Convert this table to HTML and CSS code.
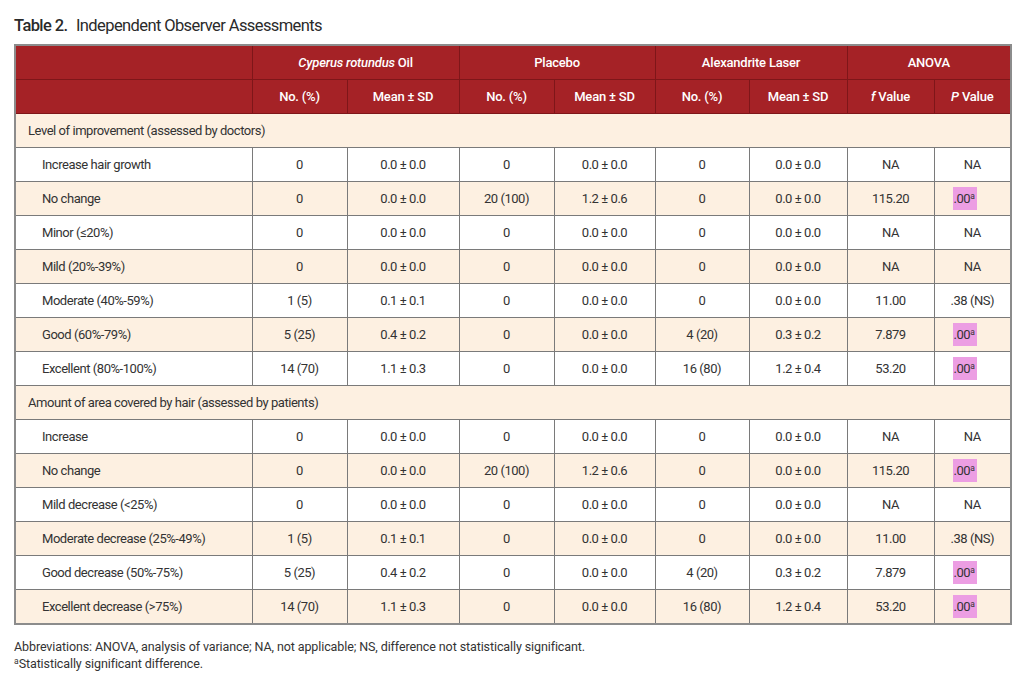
FILE: index.html
```html
<!DOCTYPE html>
<html>
<head>
<meta charset="utf-8">
<link rel="stylesheet" href="styles.css">
</head>
<body>
<div class="page">
  <h1 class="title"><span class="tnum">Table 2.</span> Independent Observer Assessments</h1>
  <table class="tbl">
    <colgroup>
      <col class="c0"><col class="c1"><col class="c2"><col class="c3"><col class="c4"><col class="c5"><col class="c6"><col class="c7"><col class="c8">
    </colgroup>
    <thead>
      <tr><th></th><th colspan="2"><i>Cyperus rotundus</i> Oil</th><th colspan="2">Placebo</th><th colspan="2">Alexandrite Laser</th><th colspan="2">ANOVA</th></tr>
      <tr><th></th><th>No. (%)</th><th>Mean ± SD</th><th>No. (%)</th><th>Mean ± SD</th><th>No. (%)</th><th>Mean ± SD</th><th><i>f</i> Value</th><th><i>P</i> Value</th></tr>
    </thead>
    <tbody>
      <tr class="sec"><td colspan="9">Level of improvement (assessed by doctors)</td></tr>
      <tr><td class="lbl">Increase hair growth</td><td>0</td><td>0.0 ± 0.0</td><td>0</td><td>0.0 ± 0.0</td><td>0</td><td>0.0 ± 0.0</td><td>NA</td><td>NA</td></tr>
      <tr class="alt"><td class="lbl">No change</td><td>0</td><td>0.0 ± 0.0</td><td>20 (100)</td><td>1.2 ± 0.6</td><td>0</td><td>0.0 ± 0.0</td><td>115.20</td><td class="pv"><span class="hl">.00<sup>a</sup></span></td></tr>
      <tr><td class="lbl">Minor (≤20%)</td><td>0</td><td>0.0 ± 0.0</td><td>0</td><td>0.0 ± 0.0</td><td>0</td><td>0.0 ± 0.0</td><td>NA</td><td>NA</td></tr>
      <tr class="alt"><td class="lbl">Mild (20%-39%)</td><td>0</td><td>0.0 ± 0.0</td><td>0</td><td>0.0 ± 0.0</td><td>0</td><td>0.0 ± 0.0</td><td>NA</td><td>NA</td></tr>
      <tr><td class="lbl">Moderate (40%-59%)</td><td>1 (5)</td><td>0.1 ± 0.1</td><td>0</td><td>0.0 ± 0.0</td><td>0</td><td>0.0 ± 0.0</td><td>11.00</td><td>.38 (NS)</td></tr>
      <tr class="alt"><td class="lbl">Good (60%-79%)</td><td>5 (25)</td><td>0.4 ± 0.2</td><td>0</td><td>0.0 ± 0.0</td><td>4 (20)</td><td>0.3 ± 0.2</td><td>7.879</td><td class="pv"><span class="hl">.00<sup>a</sup></span></td></tr>
      <tr><td class="lbl">Excellent (80%-100%)</td><td>14 (70)</td><td>1.1 ± 0.3</td><td>0</td><td>0.0 ± 0.0</td><td>16 (80)</td><td>1.2 ± 0.4</td><td>53.20</td><td class="pv"><span class="hl">.00<sup>a</sup></span></td></tr>
      <tr class="sec"><td colspan="9">Amount of area covered by hair (assessed by patients)</td></tr>
      <tr><td class="lbl">Increase</td><td>0</td><td>0.0 ± 0.0</td><td>0</td><td>0.0 ± 0.0</td><td>0</td><td>0.0 ± 0.0</td><td>NA</td><td>NA</td></tr>
      <tr class="alt"><td class="lbl">No change</td><td>0</td><td>0.0 ± 0.0</td><td>20 (100)</td><td>1.2 ± 0.6</td><td>0</td><td>0.0 ± 0.0</td><td>115.20</td><td class="pv"><span class="hl">.00<sup>a</sup></span></td></tr>
      <tr><td class="lbl">Mild decrease (&lt;25%)</td><td>0</td><td>0.0 ± 0.0</td><td>0</td><td>0.0 ± 0.0</td><td>0</td><td>0.0 ± 0.0</td><td>NA</td><td>NA</td></tr>
      <tr class="alt"><td class="lbl">Moderate decrease (25%-49%)</td><td>1 (5)</td><td>0.1 ± 0.1</td><td>0</td><td>0.0 ± 0.0</td><td>0</td><td>0.0 ± 0.0</td><td>11.00</td><td>.38 (NS)</td></tr>
      <tr><td class="lbl">Good decrease (50%-75%)</td><td>5 (25)</td><td>0.4 ± 0.2</td><td>0</td><td>0.0 ± 0.0</td><td>4 (20)</td><td>0.3 ± 0.2</td><td>7.879</td><td class="pv"><span class="hl">.00<sup>a</sup></span></td></tr>
      <tr class="alt"><td class="lbl">Excellent decrease (&gt;75%)</td><td>14 (70)</td><td>1.1 ± 0.3</td><td>0</td><td>0.0 ± 0.0</td><td>16 (80)</td><td>1.2 ± 0.4</td><td>53.20</td><td class="pv"><span class="hl">.00<sup>a</sup></span></td></tr>
    </tbody>
  </table>
  <div class="notes">
    <p>Abbreviations: ANOVA, analysis of variance; NA, not applicable; NS, difference not statistically significant.</p>
    <p><sup>a</sup>Statistically significant difference.</p>
  </div>
</div>
</body>
</html>
```

FILE: styles.css
```css
html, body {
  margin: 0;
  padding: 0;
  background: #ffffff;
}
body {
  font-family: Roboto, "Liberation Sans", sans-serif;
  color: #333333;
}
.page {
  padding: 15px 14px 0 14px;
}
.title {
  margin: 0;
  height: 29px;
  font-size: 16.5px;
  font-weight: normal;
  color: #2a2a2a;
  line-height: 21px;
  letter-spacing: -0.6px;
}
.tnum {
  font-weight: 500;
  margin-right: 5px;
}
.c0 { width: 237px; }
.c1 { width: 95px; }
.c2 { width: 112px; }
.c3 { width: 95px; }
.c4 { width: 101px; }
.c5 { width: 94px; }
.c6 { width: 98px; }
.c7 { width: 87px; }
.c8 { width: 77px; }
.tbl {
  border-collapse: collapse;
  table-layout: fixed;
  width: 996px;
  border: 2px solid #8c8c8c;
  font-size: 13px;
  letter-spacing: -0.45px;
}
.tbl th {
  background: #a52226;
  color: #ffffff;
  font-weight: 500;
  height: 33px;
  padding: 0;
  border: 1px solid #7e1619;
  text-align: center;
  font-size: 13px;
  letter-spacing: -0.2px;
}
.tbl td {
  height: 33px;
  padding: 0;
  border: 1px solid #7a7a7a;
  text-align: center;
  color: #333333;
}
.tbl td.lbl {
  text-align: left;
  padding-left: 26px;
}
.tbl tr.alt td {
  background: #fdf0e1;
}
.tbl tr.sec td {
  background: #fdf0e1;
  text-align: left;
  padding-left: 12px;
}
.tbl td.pv {
  text-align: left;
  padding-left: 18px;
}
.hl {
  background: #ec9ee3;
  padding: 4px 2px 4px 1px;
}
sup {
  font-size: 8.5px;
  vertical-align: 4px;
  line-height: 0;
  letter-spacing: 0;
}
.notes {
  margin-top: 13px;
  font-size: 12.5px;
  color: #333333;
  letter-spacing: -0.1px;
}
.notes p {
  margin: 0;
  line-height: 17px;
}
```
